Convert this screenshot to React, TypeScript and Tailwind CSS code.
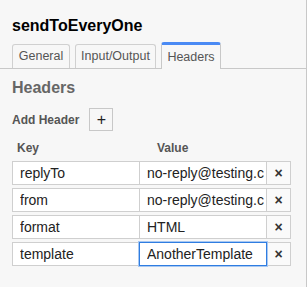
const rows = [
  { key: "replyTo", value: "no-reply@testing.com" },
  { key: "from", value: "no-reply@testing.com" },
  { key: "format", value: "HTML" },
  { key: "template", value: "AnotherTemplate", focused: true },
];

const tabs = [
  { label: "General", width: "w-[58px]" },
  { label: "Input/Output", width: "w-[81px]" },
  { label: "Headers", width: "w-[60px]", active: true },
];

export default function App() {
  return (
    <div className="w-[307px] h-[287px] bg-[#f7f7f7] border-r border-[#c8c8c8] font-['Liberation_Sans',Arial,sans-serif] overflow-hidden">
      <h1 className="pl-3 pt-[16px] text-[16px] leading-[20px] font-bold text-black">
        sendToEveryOne
      </h1>

      {/* tab strip */}
      <div className="mt-[6px] flex items-end gap-[5px] pl-3 border-b border-[#c8c8c8] h-[27px]">
        {tabs.map((t) =>
          t.active ? (
            <div
              key={t.label}
              className={`${t.width} h-[27px] -mb-px flex items-center justify-center bg-[#f7f7f7] border-x border-[#c8c8c8] border-t-[3px] border-t-[#4a8af4] rounded-t-[3px] text-[12.5px] text-[#555]`}
            >
              {t.label}
            </div>
          ) : (
            <div
              key={t.label}
              className={`${t.width} h-[24px] flex items-center justify-center border-x border-t border-[#d0d0d0] rounded-t-[3px] text-[12.5px] text-[#555]`}
            >
              {t.label}
            </div>
          )
        )}
      </div>

      <div className="pl-3 pt-[9px]">
        <h2 className="text-[16px] leading-[20px] font-bold text-[#666]">Headers</h2>

        <div className="mt-[10px] flex items-center gap-[10px]">
          <span className="text-[12px] font-bold text-[#555]">Add Header</span>
          <button className="w-[24px] h-[23px] border border-[#c8c8c8] flex items-center justify-center text-[16px] leading-none text-[#222]">
            +
          </button>
        </div>

        <div className="mt-[10px] flex text-[12px] font-bold text-[#555] leading-[14px]">
          <span className="w-[145px] pl-[5px]">Key</span>
          <span>Value</span>
        </div>

        <div className="mt-[6px] flex flex-col gap-[3px]">
          {rows.map((r) => (
            <div key={r.key} className="flex h-[24px]">
              <input
                readOnly
                value={r.key}
                className="w-[128px] h-[24px] bg-white border border-[#cfcfcf] pl-[7px] text-[14px] text-[#222] outline-none"
              />
              {r.focused ? (
                <input
                  readOnly
                  value={r.value}
                  className="relative -ml-px w-[128px] h-[24px] bg-white border border-[#2f7de1] shadow-[0_0_0_1px_#a8c8f2] pl-[7px] pr-[2px] text-[14px] text-[#222] outline-none"
                />
              ) : (
                <input
                  readOnly
                  value={r.value}
                  className="-ml-px w-[128px] h-[24px] bg-white border border-[#cfcfcf] pl-[7px] pr-[2px] text-[14px] text-[#222] outline-none"
                />
              )}
              <button className="-ml-px w-[25px] h-[24px] border border-[#cfcfcf] bg-[#fafafa] flex items-center justify-center text-[14px] font-bold leading-none text-[#333]">
                ×
              </button>
            </div>
          ))}
        </div>
      </div>
    </div>
  );
}
